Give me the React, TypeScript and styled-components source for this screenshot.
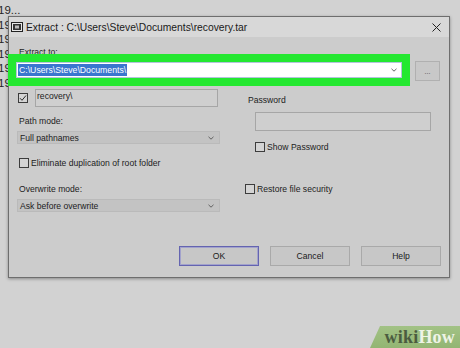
import React from 'react';
import styled, { createGlobalStyle } from 'styled-components';

const Global = createGlobalStyle`
  html, body { margin: 0; padding: 0; background: #d2d2d2; }
  body {
    width: 460px; height: 348px; overflow: hidden;
    font-family: "Liberation Sans", Arial, sans-serif;
    color: #1c1c1c;
  }
`;

const Desktop = styled.div`
  position: relative;
  width: 460px;
  height: 348px;
  overflow: hidden;
  background: #d2d2d2;
`;

const BackList = styled.div`
  padding-top: 3px;
  margin-left: -2px;
  font-size: 11.5px;
  line-height: 14.6px;
  color: #262626;
`;

const Dialog = styled.div`
  position: absolute;
  left: 8px;
  top: 16px;
  width: 442px;
  box-sizing: border-box;
  border: 1px solid #6e6e6e;
  background: #cccccc;
  box-shadow: 0 1px 3px rgba(0, 0, 0, 0.35);
  display: flex;
  flex-direction: column;
`;

const TitleBar = styled.div`
  height: 20px;
  display: flex;
  align-items: center;
  padding: 0 8px 0 2px;
  background: #d8d8d8;
`;

const TitleText = styled.span`
  margin-left: 3px;
  font-size: 10.3px;
  color: #1a1a1a;
  flex: 1;
  white-space: nowrap;
`;

const Body = styled.div`
  padding: 0 8px 11px 8px;
  display: flex;
  flex-direction: column;
`;

const Label = styled.div<{ $top?: number; $indent?: number }>`
  font-size: 8.6px;
  line-height: 12px;
  margin-top: ${(p) => p.$top ?? 0}px;
  padding-left: ${(p) => p.$indent ?? 0}px;
  white-space: nowrap;
`;

const ExtractRow = styled.div`
  display: flex;
  align-items: flex-start;
  margin-top: -4px;
`;

const HighlightFrame = styled.div`
  position: relative;
  margin-left: -9px;
  border: 8px solid #24e831;
  display: flex;
`;

const Combo = styled.div`
  width: 386px;
  height: 16px;
  box-sizing: border-box;
  background: #ffffff;
  border: 1px solid #b4c3dc;
  display: flex;
  align-items: center;
  padding: 0 4px 0 1px;
`;

const Selected = styled.span`
  background: #3a76cf;
  color: #ffffff;
  font-size: 8.7px;
  line-height: 12px;
  padding: 0 1px;
  white-space: nowrap;
`;

const Spacer = styled.div`
  flex: 1;
`;

const SmallButton = styled.div`
  margin-left: 5px;
  margin-top: 7px;
  width: 25px;
  height: 20px;
  box-sizing: border-box;
  border: 1px solid #b0b0b0;
  background: #c8c8c8;
  display: flex;
  align-items: center;
  justify-content: center;
  font-size: 7px;
  color: #444;
`;

const Columns = styled.div`
  margin-top: 3px;
  display: grid;
  grid-template-columns: 203px 187px;
  column-gap: 25px;
  align-items: start;
`;

const Column = styled.div`
  display: flex;
  flex-direction: column;
`;

const CheckFieldRow = styled.div`
  display: flex;
  align-items: center;
  height: 18px;
`;

const Box = styled.div`
  width: 10px;
  height: 10px;
  box-sizing: border-box;
  border: 1px solid #3c3c3c;
  background: #d4d4d4;
  flex: none;
  display: flex;
  align-items: center;
  justify-content: center;
`;

const TextField = styled.div<{ $w: number; $h: number; $left?: number; $top?: number }>`
  width: ${(p) => p.$w}px;
  height: ${(p) => p.$h}px;
  margin-left: ${(p) => p.$left ?? 0}px;
  margin-top: ${(p) => p.$top ?? 0}px;
  box-sizing: border-box;
  border: 1px solid #a6a6a6;
  background: #cfcfcf;
  font-size: 8.6px;
  line-height: 11px;
  padding: 1px 1px 0;
`;

const Select = styled.div`
  margin-top: 4px;
  height: 13px;
  box-sizing: border-box;
  border: 1px solid #bababa;
  background: #c3c3c3;
  display: flex;
  align-items: center;
  padding: 0 5px 0 2px;
  font-size: 8.6px;
`;

const CheckRow = styled.div<{ $top: number; $indent: number }>`
  display: flex;
  align-items: center;
  gap: 2px;
  height: 12px;
  margin-top: ${(p) => p.$top}px;
  padding-left: ${(p) => p.$indent}px;
  font-size: 8.6px;
  white-space: nowrap;
`;

const Footer = styled.div`
  margin-top: 34px;
  display: flex;
  justify-content: flex-end;
  gap: 11px;
`;

const Button = styled.div<{ $default?: boolean }>`
  width: 80px;
  height: 20px;
  box-sizing: border-box;
  border: 1px solid ${(p) => (p.$default ? '#6464b0' : '#a9a9a9')};
  box-shadow: ${(p) => (p.$default ? 'inset 0 0 0 1px #a2a2cc' : 'none')};
  background: #c7c7c7;
  display: flex;
  align-items: center;
  justify-content: center;
  font-size: 8.6px;
  color: #1a1a1a;
`;

const Badge = styled.div`
  position: absolute;
  right: 0;
  bottom: 0;
  width: 90px;
  height: 22px;
  background: linear-gradient(#a2c285, #93b573);
  clip-path: polygon(10px 0, 100% 0, 100% 100%, 0 100%);
  display: flex;
  align-items: center;
  justify-content: flex-end;
  padding-right: 5px;
  box-sizing: border-box;
  font-family: "Liberation Serif", "Times New Roman", serif;
  font-weight: bold;
  font-size: 18px;
  letter-spacing: 0.2px;
`;

const Wiki = styled.span`
  color: #4b5c40;
`;

const How = styled.span`
  color: #eef3e6;
`;

const Chevron = () => (
  <svg width="6" height="4" viewBox="0 0 6 4">
    <polyline points="0.5,0.8 3,3.2 5.5,0.8" fill="none" stroke="#555" strokeWidth="0.9" />
  </svg>
);

const Check = () => (
  <svg width="8" height="8" viewBox="0 0 8 8">
    <polyline points="1,4.2 3,6.3 7,1.5" fill="none" stroke="#2a2a2a" strokeWidth="1" />
  </svg>
);

const AppIcon = () => (
  <svg width="12" height="10" viewBox="0 0 12 10">
    <rect x="0.5" y="0.5" width="11" height="9" fill="#e8e8e8" stroke="#222" />
    <rect x="2" y="2" width="8" height="6" fill="#333" />
    <rect x="4" y="3.5" width="4" height="3" fill="#bbb" />
  </svg>
);

const CloseIcon = () => (
  <svg width="9" height="9" viewBox="0 0 9 9">
    <path d="M0.5 0.5 L8.5 8.5 M8.5 0.5 L0.5 8.5" stroke="#222" strokeWidth="1" />
  </svg>
);

export default function App() {
  const back = ['19...', '19', '19', '19', '19', '19'];
  return (
    <Desktop>
      <Global />
      <BackList>
        {back.map((t, i) => (
          <div key={i}>{t}</div>
        ))}
      </BackList>
      <Dialog>
        <TitleBar>
          <AppIcon />
          <TitleText>Extract : C:\Users\Steve\Documents\recovery.tar</TitleText>
          <CloseIcon />
        </TitleBar>
        <Body>
          <Label $top={9} $indent={2}>Extract to:</Label>
          <ExtractRow>
            <HighlightFrame>
              <Combo>
                <Selected>C:\Users\Steve\Documents\</Selected>
                <Spacer />
                <Chevron />
              </Combo>
            </HighlightFrame>
            <SmallButton>...</SmallButton>
          </ExtractRow>
          <Columns>
            <Column>
              <CheckFieldRow>
                <Box style={{ marginLeft: 1 }}>
                  <Check />
                </Box>
                <TextField $w={183} $h={18} $left={7}>recovery\</TextField>
              </CheckFieldRow>
              <Label $top={8} $indent={2}>Path mode:</Label>
              <Select>
                Full pathnames
                <Spacer />
                <Chevron />
              </Select>
              <CheckRow $top={13} $indent={2}>
                <Box />
                Eliminate duplication of root folder
              </CheckRow>
              <Label $top={14} $indent={2}>Overwrite mode:</Label>
              <Select>
                Ask before overwrite
                <Spacer />
                <Chevron />
              </Select>
            </Column>
            <Column>
              <Label $top={5} $indent={3}>Password</Label>
              <TextField $w={176} $h={19} $left={10} $top={6} />
              <CheckRow $top={10} $indent={10}>
                <Box />
                Show Password
              </CheckRow>
              <CheckRow $top={30} $indent={0}>
                <Box />
                Restore file security
              </CheckRow>
            </Column>
          </Columns>
          <Footer>
            <Button $default>OK</Button>
            <Button>Cancel</Button>
            <Button>Help</Button>
          </Footer>
        </Body>
      </Dialog>
      <Badge>
        <Wiki>wiki</Wiki>
        <How>How</How>
      </Badge>
    </Desktop>
  );
}
